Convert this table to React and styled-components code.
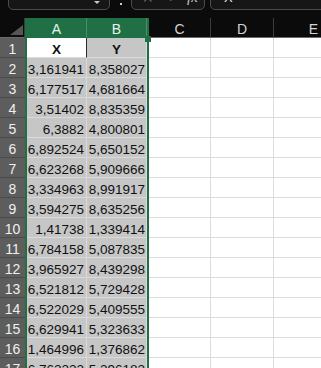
import React from 'react'
import styled, { createGlobalStyle } from 'styled-components'

const GlobalStyle = createGlobalStyle`
  html, body {
    margin: 0;
    padding: 0;
    background: #0b0b0b;
    overflow: hidden;
  }
  body {
    font-family: "Liberation Sans", Arial, sans-serif;
  }
`

const Sheet = styled.div`
  width: 321px;
  height: 368px;
  overflow: hidden;
  background: #0b0b0b;
  display: flex;
  flex-direction: column;
`

const FormulaBar = styled.div`
  height: 18px;
  flex: none;
  overflow: hidden;
  display: flex;
  align-items: flex-end;
  padding: 0 0 8px 8px;
  box-sizing: border-box;
`

const Box = styled.div`
  position: relative;
  height: 20px;
  flex: none;
  width: ${p => p.$width}px;
  margin-right: ${p => p.$gap || 0}px;
  box-sizing: border-box;
  border: 1px solid #4b4b4b;
  border-radius: 5px;
  background: #161616;
  display: flex;
  align-items: center;
  padding: 0 0 5px ${p => p.$pad || 0}px;
  gap: ${p => p.$inner || 0}px;
  color: #e6e6e6;
  font-size: 13px;
`

const Caret = styled.span`
  margin-left: auto;
  margin-right: 9px;
  margin-top: 9px;
  width: 0;
  height: 0;
  border-left: 3px solid transparent;
  border-right: 3px solid transparent;
  border-top: 3px solid #c8c8c8;
`

const Dot = styled.span`
  width: 2px;
  height: 2px;
  background: #cfcfcf;
  margin: 0 9px 5px 10px;
  flex: none;
`

const Icon = styled.span`
  color: ${p => p.$color || '#5c5c5c'};
  font-size: ${p => p.$size || 13}px;
  font-style: ${p => (p.$italic ? 'italic' : 'normal')};
  font-family: ${p => (p.$italic ? '"Liberation Serif", serif' : 'inherit')};
  line-height: 1;
`

const Grid = styled.div`
  display: flex;
  flex: 1;
  min-height: 0;
  align-items: flex-start;
`

const Column = styled.div`
  display: flex;
  flex-direction: column;
  flex: none;
  width: ${p => p.$width}px;
`

const Selection = styled.div`
  position: relative;
  display: flex;
  flex: none;
  border-left: 2px solid #1f7145;
  border-right: 2px solid #1f7145;
`

const Handle = styled.span`
  position: absolute;
  right: -4px;
  top: 18px;
  width: 6px;
  height: 6px;
  background: #1f7145;
  z-index: 2;
`

const Corner = styled.div`
  height: 20px;
  flex: none;
  box-sizing: border-box;
  border-bottom: 1px solid #6a6a6a;
  border-right: 1px solid #3a3a3a;
  display: flex;
  align-items: flex-end;
  justify-content: flex-end;
  padding: 0 1px 2px 0;
  &::after {
    content: '';
    width: 0;
    height: 0;
    border-left: 13px solid transparent;
    border-bottom: 10px solid #555;
  }
`

const ColHead = styled.div`
  height: 20px;
  flex: none;
  box-sizing: border-box;
  display: flex;
  align-items: center;
  justify-content: center;
  font-size: 14px;
  padding-top: 2px;
  background: ${p => (p.$active ? '#1f7145' : '#0b0b0b')};
  color: ${p => (p.$active ? '#e9f1ec' : '#d4d4d4')};
  border-right: 1px solid ${p => (p.$active ? '#4d8d68' : '#3c3c3c')};
  border-bottom: 1px solid ${p => (p.$active ? '#1f7145' : '#6a6a6a')};
`

const RowHead = styled.div`
  height: 20px;
  flex: none;
  box-sizing: border-box;
  display: flex;
  align-items: center;
  justify-content: center;
  padding-top: 3px;
  background: #5d5d5d;
  color: #efefef;
  font-size: 14px;
  border-bottom: 1px solid #4a4a4a;
`

const Cell = styled.div`
  height: 20px;
  flex: none;
  box-sizing: border-box;
  display: flex;
  align-items: center;
  justify-content: ${p => (p.$head ? 'center' : 'flex-end')};
  padding-top: 3px;
  padding-right: ${p => (p.$head ? 0 : p.$pr ?? 2)}px;
  font-size: 13.5px;
  font-weight: ${p => (p.$head ? 700 : 400)};
  color: #111;
  white-space: nowrap;
  background: ${p => (p.$white ? '#ffffff' : p.$sel ? '#c6c6c6' : '#ffffff')};
  border-bottom: 1px solid ${p => (p.$sel ? '#dadada' : '#dcdcdc')};
  border-right: 1px solid ${p => (p.$dark ? '#2a2a2a' : p.$sel ? '#dadada' : '#dcdcdc')};
`

const data = [
  ['3,161941', '8,358027'],
  ['6,177517', '4,681664'],
  ['3,51402', '8,835359'],
  ['6,3882', '4,800801'],
  ['6,892524', '5,650152'],
  ['6,623268', '5,909666'],
  ['3,334963', '8,991917'],
  ['3,594275', '8,635256'],
  ['1,41738', '1,339414'],
  ['6,784158', '5,087835'],
  ['3,965927', '8,439298'],
  ['6,521812', '5,729428'],
  ['6,522029', '5,409555'],
  ['6,629941', '5,323633'],
  ['1,464996', '1,376862'],
  ['6,762222', '5,296182'],
]

const ROWS = 17

const EmptyColumn = ({ label, width }) => (
  <Column $width={width}>
    <ColHead>{label}</ColHead>
    {Array.from({ length: ROWS }, (_, i) => (
      <Cell key={i} />
    ))}
  </Column>
)

export default function App() {
  return (
    <>
      <GlobalStyle />
      <Sheet>
        <FormulaBar>
          <Box $width={102}>
            <Caret />
          </Box>
          <Dot />
          <Box $width={74} $gap={5} $pad={10} $inner={12}>
            <Icon $size={14}>✕</Icon>
            <Icon $size={11}>⌄</Icon>
            <Icon $italic $color="#c4c4c4" $size={15}>fx</Icon>
          </Box>
          <Box $width={130} $pad={13}>
            <span>X</span>
          </Box>
        </FormulaBar>
        <Grid>
          <Column $width={25}>
            <Corner />
            {Array.from({ length: ROWS }, (_, i) => (
              <RowHead key={i}>{i + 1}</RowHead>
            ))}
          </Column>
          <Selection>
            <Handle />
            <Column $width={60}>
              <ColHead $active>A</ColHead>
              <Cell $head $white $dark>X</Cell>
              {data.map((r, i) => (
                <Cell key={i} $sel>{r[0]}</Cell>
              ))}
            </Column>
            <Column $width={60}>
              <ColHead $active>B</ColHead>
              <Cell $head $sel>Y</Cell>
              {data.map((r, i) => (
                <Cell key={i} $sel $pr={1}>{r[1]}</Cell>
              ))}
            </Column>
          </Selection>
          <EmptyColumn label="C" width={62} />
          <EmptyColumn label="D" width={63} />
          <EmptyColumn label="E" width={80} />
        </Grid>
      </Sheet>
    </>
  )
}
